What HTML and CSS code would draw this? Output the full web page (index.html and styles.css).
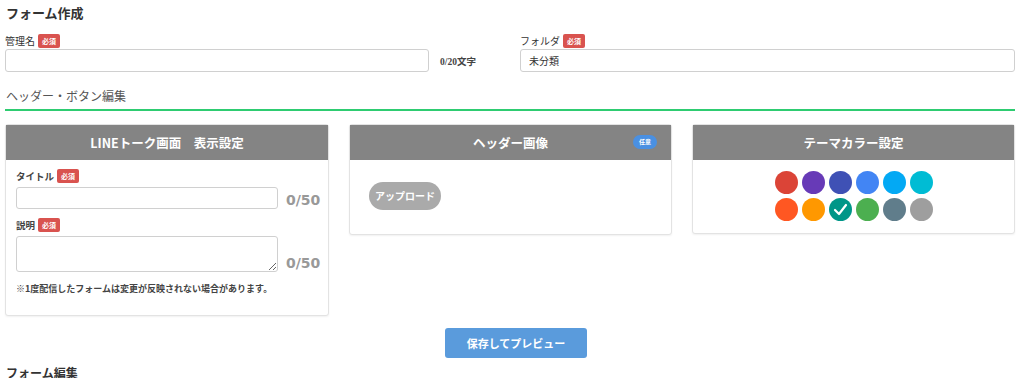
FILE: index.html
```html
<!DOCTYPE html>
<html lang="ja">
<head>
  <meta charset="UTF-8">
  <title>フォーム作成</title>
  <link rel="stylesheet" href="styles.css">
</head>
<body>
  <div id="content">
    <h1 class="page-title">フォーム作成</h1>

    <div class="form-row">
      <div class="field">
        <div class="field-label">管理名 <span class="badge badge-required">必須</span></div>
        <div class="field-input">
          <input type="text" class="text-input name-input">
          <span class="char-count">0/20文字</span>
        </div>
      </div>
      <div class="field">
        <div class="field-label">フォルダ <span class="badge badge-required">必須</span></div>
        <div class="field-input">
          <input type="text" class="text-input" value="未分類">
        </div>
      </div>
    </div>

    <h2 class="section-title">ヘッダー・ボタン編集</h2>

    <div class="cards">
      <section class="card">
        <div class="card-header">LINEトーク画面　表示設定</div>
        <div class="card-body talk-body">
          <div class="field-label small">タイトル <span class="badge badge-required">必須</span></div>
          <div class="count-row">
            <input type="text" class="text-input talk-input">
            <span class="count">0/50</span>
          </div>
          <div class="field-label small desc-label">説明 <span class="badge badge-required">必須</span></div>
          <div class="count-row">
            <textarea class="text-input talk-textarea"></textarea>
            <span class="count">0/50</span>
          </div>
          <p class="note">※1度配信したフォームは変更が反映されない場合があります。</p>
        </div>
      </section>

      <section class="card">
        <div class="card-header">ヘッダー画像 <span class="badge badge-optional">任意</span></div>
        <div class="card-body upload-body">
          <button class="upload-button">アップロード</button>
        </div>
      </section>

      <section class="card">
        <div class="card-header">テーマカラー設定</div>
        <div class="card-body color-body">
          <div class="swatches">
            <span class="swatch" style="background:#db4437"></span>
            <span class="swatch" style="background:#673ab7"></span>
            <span class="swatch" style="background:#3f51b5"></span>
            <span class="swatch" style="background:#4285f4"></span>
            <span class="swatch" style="background:#03a9f4"></span>
            <span class="swatch" style="background:#00bcd4"></span>
            <span class="swatch" style="background:#ff5722"></span>
            <span class="swatch" style="background:#ff9800"></span>
            <span class="swatch selected" style="background:#009688">
              <svg width="23" height="23" viewBox="0 0 23 23"><polyline points="6,12 10,16 17,7" fill="none" stroke="#fff" stroke-width="2.2" stroke-linecap="round" stroke-linejoin="round"/></svg>
            </span>
            <span class="swatch" style="background:#4caf50"></span>
            <span class="swatch" style="background:#607d8b"></span>
            <span class="swatch" style="background:#9e9e9e"></span>
          </div>
        </div>
      </section>
    </div>

    <div class="actions">
      <button class="preview-button">保存してプレビュー</button>
    </div>

    <h2 class="section-title bottom-title">フォーム編集</h2>
  </div>
</body>
</html>
```

FILE: styles.css
```css
body {
  margin: 0;
  font-family: "Noto Sans CJK JP", "Noto Sans", sans-serif;
  color: #333;
  background-color: #fff;
}
#content {
  padding: 0 9px 0 5px;
}
.page-title {
  margin: 0;
  padding: 4px 0 0 1px;
  font-size: 13px;
  line-height: 18px;
  font-weight: bold;
}
.form-row {
  display: grid;
  grid-template-columns: 1fr 1fr;
  column-gap: 20px;
  margin-top: 11px;
}
.field-label {
  display: flex;
  align-items: center;
  gap: 3px;
  height: 16px;
  font-size: 10px;
  line-height: 16px;
  color: #333;
}
.badge {
  display: inline-block;
  color: #fff;
  font-size: 7px;
  font-weight: bold;
  line-height: 14px;
  height: 14px;
  padding: 0 4px;
  border-radius: 2px;
}
.badge-required {
  background-color: #d9534f;
}
.badge-optional {
  background-color: #4a90e2;
  border-radius: 7px;
  padding: 0 6px;
  line-height: 14px;
  font-size: 6px;
}
.field-input {
  display: flex;
  align-items: center;
}
.text-input {
  box-sizing: border-box;
  height: 23px;
  width: 100%;
  border: 1px solid #d0d0d0;
  border-radius: 3px;
  padding: 0 8px;
  font-family: inherit;
  font-size: 10px;
  color: #333;
  background: #fff;
}
.name-input {
  width: 424px;
  flex: none;
}
.char-count {
  margin-left: 11px;
  font-family: "Liberation Serif", "Noto Sans CJK JP", serif;
  font-size: 9.5px;
  font-weight: bold;
  color: #444;
}
.section-title {
  margin: 0;
  padding: 16px 0 5px 1px;
  font-size: 12px;
  line-height: 16px;
  font-weight: normal;
  color: #555;
  border-bottom: 2px solid #2ecc71;
}
.cards {
  display: grid;
  grid-template-columns: 324px 323px 323px;
  column-gap: 20px;
  align-items: start;
  margin-top: 13px;
}
.card {
  border: 1px solid #e3e3e3;
  border-radius: 3px;
  box-shadow: 0 1px 2px rgba(0,0,0,0.06);
  background: #fff;
}
.card-header {
  position: relative;
  height: 35px;
  line-height: 35px;
  background-color: #848484;
  color: #fff;
  font-size: 12.5px;
  font-weight: bold;
  text-align: center;
}
.card-header .badge-optional {
  position: absolute;
  right: 14px;
  top: 10px;
}
.talk-body {
  padding: 8px 10px 19px 10px;
}
.field-label.small {
  font-size: 9.5px;
  font-weight: bold;
  color: #444;
}
.desc-label {
  margin-top: 8px;
}
.count-row {
  display: flex;
  align-items: flex-end;
  margin-top: 3px;
}
.talk-input {
  width: 262px;
  height: 22px;
  flex: none;
}
.talk-textarea {
  width: 262px;
  height: 36px;
  flex: none;
  resize: vertical;
}
.count {
  margin-left: 8px;
  font-family: "DejaVu Sans", sans-serif;
  font-size: 14px;
  font-weight: bold;
  color: #999;
  line-height: 18px;
}
.note {
  margin: 10px 0 0 0;
  font-size: 9px;
  font-weight: bold;
  color: #444;
  line-height: 14px;
}
.upload-body {
  padding: 21px 20px 24px 19px;
}
.upload-button {
  height: 28px;
  padding: 0 6px;
  border: none;
  border-radius: 14px;
  background-color: #aaaaaa;
  color: #fff;
  font-family: inherit;
  font-size: 10px;
  font-weight: bold;
}
.color-body {
  padding: 11px 0 12px 0;
}
.swatches {
  display: grid;
  grid-template-columns: repeat(6, 23px);
  gap: 4px 4px;
  justify-content: center;
}
.swatch {
  display: block;
  width: 23px;
  height: 23px;
  border-radius: 50%;
}
.swatch svg {
  display: block;
}
.actions {
  display: flex;
  justify-content: center;
  padding-left: 12px;
  margin-top: 12px;
}
.preview-button {
  width: 142px;
  height: 30px;
  border: none;
  border-radius: 3px;
  background-color: #5a9bdc;
  color: #fff;
  font-family: inherit;
  font-size: 11px;
  font-weight: bold;
}
.bottom-title {
  padding: 7px 0 0 1px;
  border-bottom: none;
  font-weight: bold;
  color: #333;
}
```
